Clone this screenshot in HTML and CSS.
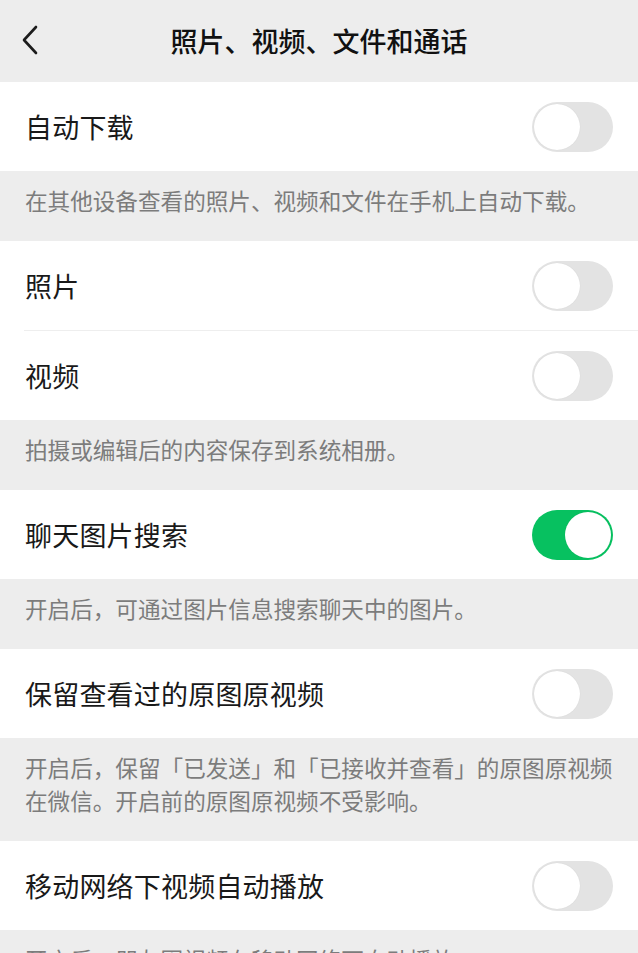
FILE: index.html
```html
<!DOCTYPE html>
<html lang="zh-CN">
<head>
<meta charset="utf-8">
<title>照片、视频、文件和通话</title>
<link rel="stylesheet" href="styles.css">
</head>
<body>
<header class="nav">
  <div class="nav-back">
    <svg width="20" height="32" viewBox="0 0 20 32"><path d="M15 3 L3 16 L15 29" fill="none" stroke="#1c1c1c" stroke-width="2.6" stroke-linecap="round" stroke-linejoin="round"/></svg>
  </div>
  <div class="nav-title">照片、视频、文件和通话</div>
  <div></div>
</header>

<section class="group">
  <div class="row"><span class="label">自动下载</span><span class="switch"></span></div>
</section>
<p class="desc">在其他设备查看的照片、视频和文件在手机上自动下载。</p>

<section class="group">
  <div class="row"><span class="label">照片</span><span class="switch"></span></div>
  <div class="divider"></div>
  <div class="row"><span class="label">视频</span><span class="switch"></span></div>
</section>
<p class="desc">拍摄或编辑后的内容保存到系统相册。</p>

<section class="group">
  <div class="row"><span class="label">聊天图片搜索</span><span class="switch on"></span></div>
</section>
<p class="desc">开启后，可通过图片信息搜索聊天中的图片。</p>

<section class="group">
  <div class="row"><span class="label">保留查看过的原图原视频</span><span class="switch"></span></div>
</section>
<p class="desc">开启后，保留「已发送」和「已接收并查看」的原图原视频在微信。开启前的原图原视频不受影响。</p>

<section class="group">
  <div class="row"><span class="label">移动网络下视频自动播放</span><span class="switch"></span></div>
</section>
<p class="desc">开启后，朋友圈视频在移动网络下自动播放。</p>
</body>
</html>
```

FILE: styles.css
```css
* { box-sizing: border-box; }

html, body {
  margin: 0;
  padding: 0;
  background: #ededed;
  font-family: "Noto Sans CJK SC", "Noto Sans", sans-serif;
  color: #191919;
}

.nav {
  height: 82px;
  display: grid;
  grid-template-columns: 1fr auto 1fr;
  align-items: center;
  padding-bottom: 2px;
}

.nav-back {
  padding-left: 21px;
  display: flex;
  align-items: center;
}

.nav-back svg { display: block; }

.nav-title {
  font-size: 27px;
  font-weight: 500;
  color: #111;
}

.group {
  background: #fff;
}

.row {
  height: 89px;
  padding: 0 25px 0 25px;
  display: flex;
  align-items: center;
  justify-content: space-between;
}

.label {
  font-size: 27px;
  color: #191919;
  letter-spacing: 0.2px;
}

.divider {
  height: 1px;
  margin-left: 24px;
  background: #eeeeee;
}

.switch {
  width: 81px;
  height: 50px;
  border-radius: 25px;
  background: #e3e3e3;
  position: relative;
  flex: none;
}

.switch::after {
  content: "";
  position: absolute;
  top: 2px;
  left: 2px;
  width: 46px;
  height: 46px;
  border-radius: 50%;
  background: #fff;
  box-shadow: 0 0 1px rgba(0,0,0,0.12);
}

.switch.on {
  background: #07c160;
}

.switch.on::after {
  left: auto;
  right: 2px;
}

.desc {
  margin: 0;
  padding: 13px 14px 24px 25px;
  font-size: 22.6px;
  line-height: 33px;
  color: #7c7c7c;
}
```
